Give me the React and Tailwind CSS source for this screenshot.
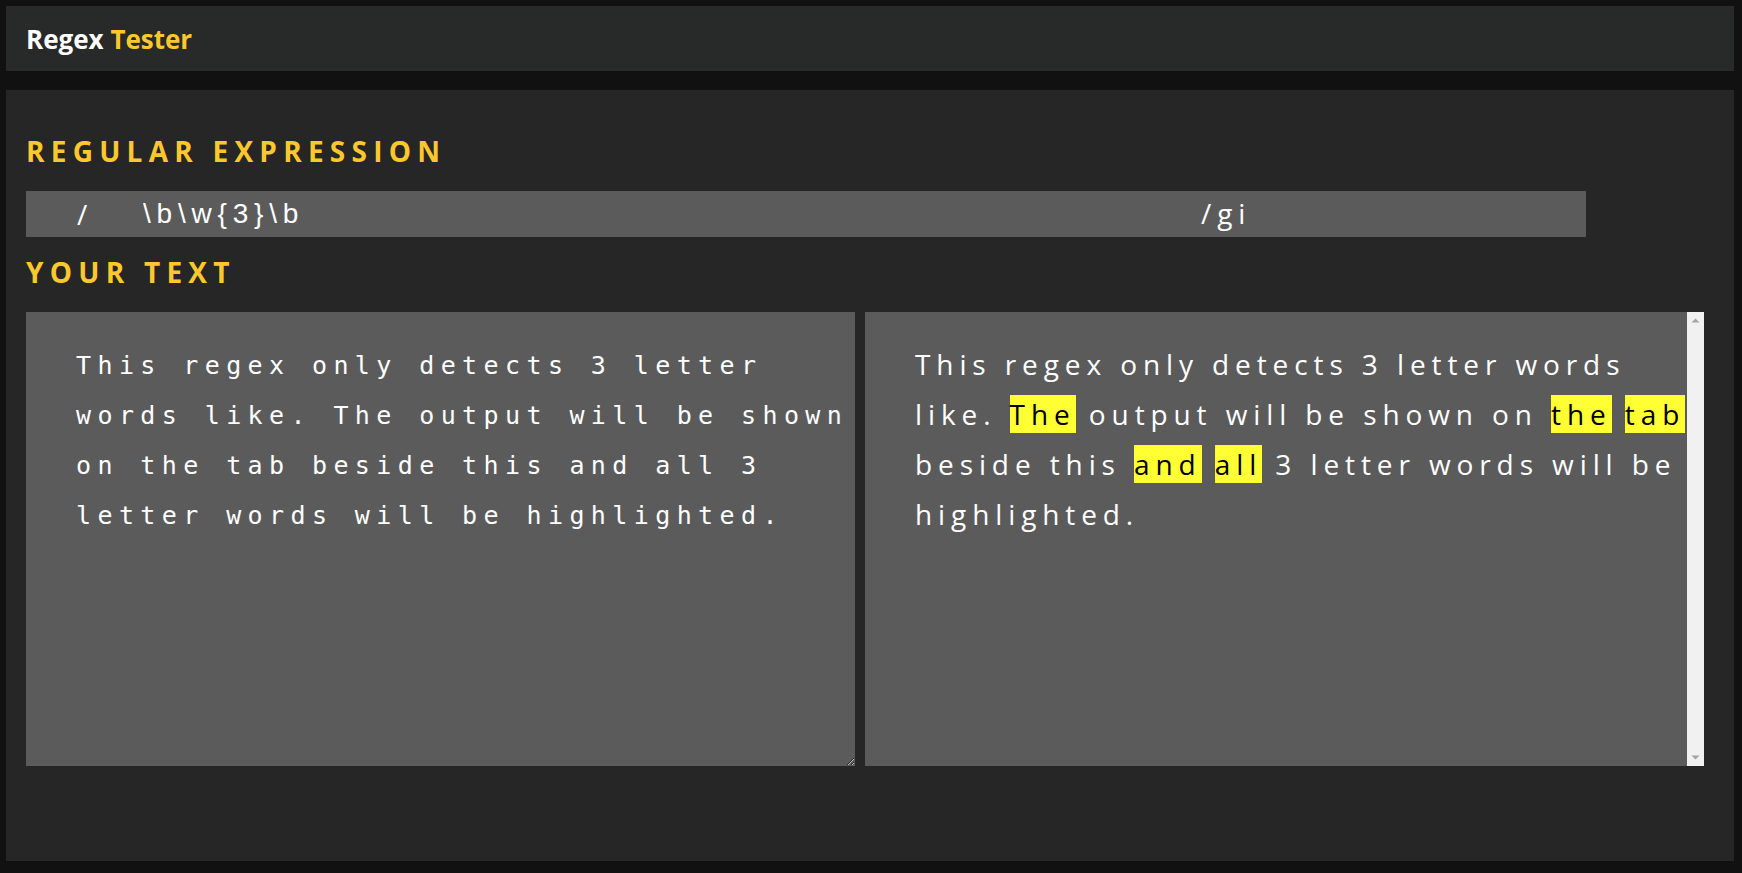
import React from "react";

const TEXT =
  "This regex only detects 3 letter words like. The output will be shown on the tab beside this and all 3 letter words will be highlighted.";

function Highlighted({ text }) {
  const re = /\b\w{3}\b/gi;
  const parts = [];
  let last = 0;
  let m;
  let k = 0;
  while ((m = re.exec(text)) !== null) {
    if (m.index > last) parts.push(<span key={k++}>{text.slice(last, m.index)}</span>);
    parts.push(
      <span key={k++} className="bg-[#ffff33] text-black">
        {m[0]}
      </span>
    );
    last = m.index + m[0].length;
  }
  if (last < text.length) parts.push(<span key={k++}>{text.slice(last)}</span>);
  return parts;
}

export default function App() {
  return (
    <div className="min-h-screen bg-[#111111] pl-[6px] pr-[8px] pt-[6px] font-['Open_Sans',sans-serif]">
      <header className="h-[65px] bg-[#282a2a] flex items-center pl-[20px]">
        <h1 className="text-[26px] font-bold leading-none">
          <span className="text-white">Regex</span>{" "}
          <span className="text-[#fdc82d]">Tester</span>
        </h1>
      </header>

      <main className="mt-[19px] h-[771px] bg-[#262626] px-[20px] pt-[42px]">
        <h2 className="text-[28px] font-bold leading-[38px] tracking-[6.25px] text-[#fdc82d]">
          REGULAR EXPRESSION
        </h2>
        <div className="mt-[21px] w-[1560px] h-[46px] bg-[#5b5b5b] flex items-center pl-[51px] text-white text-[28px]">
          <span className="w-[66px] font-['Open_Sans',sans-serif] leading-none">/</span>
          <input
            className="w-[1058px] bg-transparent outline-none border-0 p-0 text-white text-[28px] tracking-[5.8px] font-['Liberation_Sans',Arial,sans-serif] leading-none"
            defaultValue={"\\b\\w{3}\\b"}
            readOnly
          />
          <span className="tracking-[5.9px] leading-none -mt-[3px]">/gi</span>
        </div>

        <h2 className="mt-[16px] text-[28px] font-bold leading-[38px] tracking-[6.25px] text-[#fdc82d]">
          YOUR TEXT
        </h2>

        <div className="mt-[21px] flex gap-[10px] h-[454px]">
          <textarea
            className="w-[829px] h-[454px] bg-[#5b5b5b] text-white border-0 outline-none pl-[50px] pr-0 pt-[29px] text-[25px] leading-[50px] tracking-[6.4px] font-['DejaVu_Sans_Mono',monospace]"
            defaultValue={TEXT}
          />
          <div className="w-[839px] h-[454px] bg-[#5b5b5b] flex">
            <div className="flex-1 pl-[50px] pr-0 pt-[27px] text-white text-[28px] leading-[50px] tracking-[5.9px] font-['Open_Sans',sans-serif]">
              <Highlighted text={TEXT} />
            </div>
            <div className="w-[17px] bg-[#f1f1f1] flex flex-col items-center justify-between py-[6px]">
              <svg width="9" height="5" viewBox="0 0 9 5">
                <polygon points="0.5,4.5 8.5,4.5 4.5,0.5" fill="#a3a3a3" />
              </svg>
              <svg width="9" height="5" viewBox="0 0 9 5">
                <polygon points="0.5,0.5 8.5,0.5 4.5,4.5" fill="#a3a3a3" />
              </svg>
            </div>
          </div>
        </div>
      </main>
    </div>
  );
}
